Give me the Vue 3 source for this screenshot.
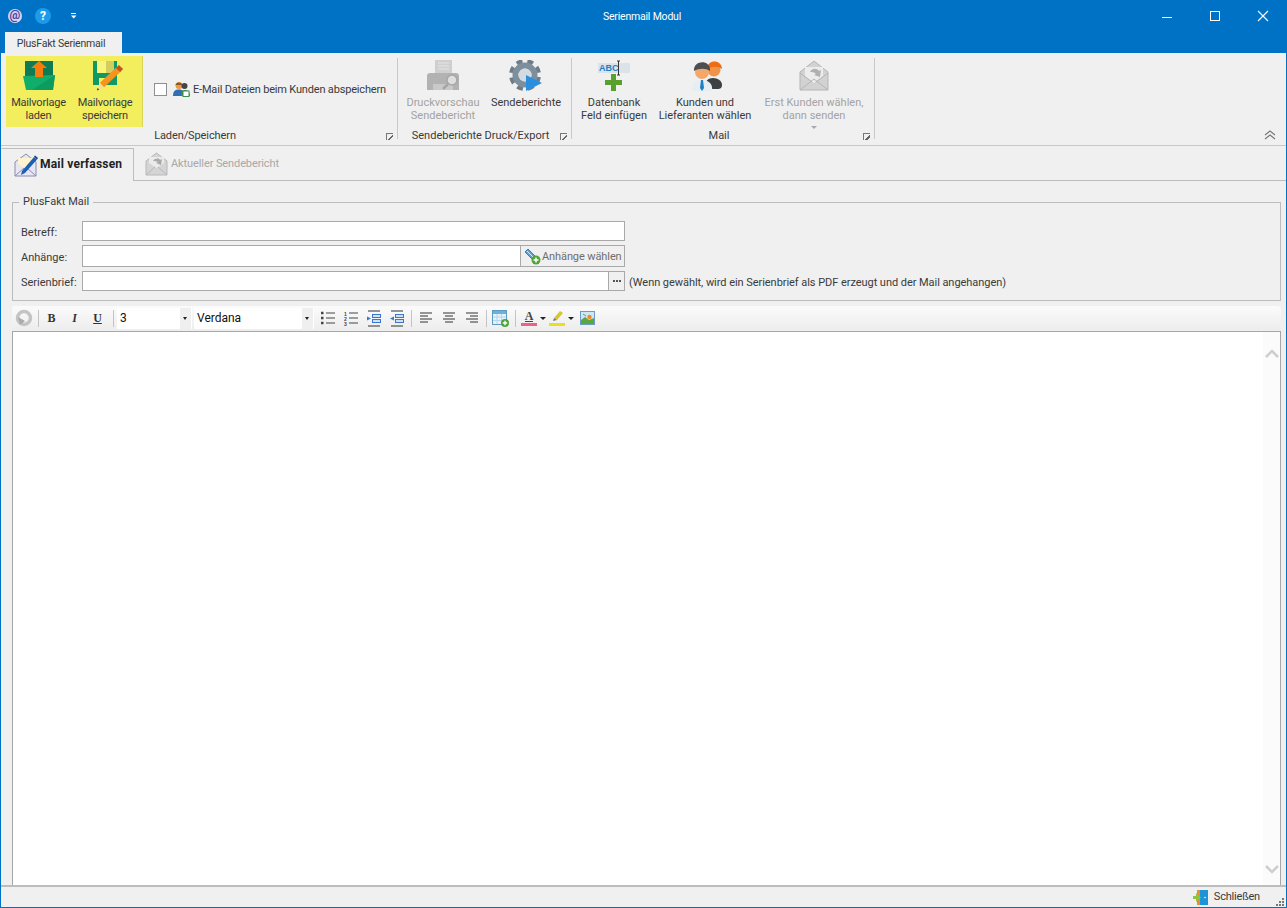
<template>
  <div class="win">

    <!-- title bar -->
    <header class="titlebar">
      <div class="qat">
        <span class="qat-at">@</span>
        <span class="qat-help">?</span>
        <svg class="qat-more" width="8" height="6" viewBox="0 0 8 6"><rect x="1" y="0" width="5" height="1" fill="#fff"/><path d="M1 2.500h5.500L3.700 5.500z" fill="#fff"/></svg>
      </div>
      <div class="title">Serienmail Modul</div>
      <div class="winbtns">
        <svg width="48" height="32" viewBox="0 0 48 32"><rect x="20" y="17" width="10" height="1" fill="#fff"/></svg>
        <svg width="48" height="32" viewBox="0 0 48 32"><rect x="20.500" y="11.500" width="9" height="9" fill="none" stroke="#fff"/></svg>
        <svg width="48" height="32" viewBox="0 0 48 32"><path d="M20 11l10 10M30 11l-10 10" stroke="#fff" stroke-width="1.100"/></svg>
      </div>
    </header>

    <div class="ribbon-tabs">
      <div class="ribbon-tab">PlusFakt Serienmail</div>
    </div>

    <!-- ribbon -->
    <section class="ribbon">
      <div class="rgroup g1">
        <div class="rbody">
          <div class="marked">
            <button class="rbtn w65">
              <svg width="32" height="32" viewBox="0 0 32 32">
                <rect x="2" y="1" width="28" height="19" fill="#0e7b55"/>
                <path d="M0 16L32 15 30 30H3z" fill="#10ad6b"/>
                <path d="M32 15L30 30H9z" fill="#0d9c60"/>
                <path d="M16 1l8 7h-4v9h-8V8H8z" fill="#f57c0c"/>
              </svg>
              <span>Mailvorlage<br>laden</span>
            </button>
            <button class="rbtn w68">
              <svg class="floppy" width="34" height="32" viewBox="0 0 34 32">
                <rect x="2" y="1" width="24" height="24" fill="#0e9a66"/>
                <rect x="6" y="1" width="9" height="12" fill="#f8f57c"/>
                <rect x="15" y="1" width="8" height="12" fill="#d2cd5c"/>
                <rect x="8" y="18" width="7" height="7" fill="#f2ee5e"/>
                <path d="M11 25L28 9" stroke="#f6931f" stroke-width="6"/>
                <path d="M27 10l3-3" stroke="#c8501c" stroke-width="6"/>
                <path d="M8.500 23.500l4.500 4-6 2.500z" fill="#f7d9a0"/>
                <path d="M6.500 28l1.800 1.500-2.300 1z" fill="#333"/>
              </svg>
              <span>Mailvorlage<br>speichern</span>
            </button>
          </div>
          <label class="chk-row">
            <span class="chk"></span>
            <svg width="17" height="16" viewBox="0 0 17 16">
              <circle cx="6" cy="4.500" r="3.500" fill="#ec9a45"/>
              <path d="M2.500 4C3 .5 9 .5 9.500 4z" fill="#8a5a22"/>
              <path d="M0 15c0-5 2-6.500 6-6.500s5 2 5 6.500z" fill="#2e6fb5"/>
              <circle cx="11.500" cy="5" r="3" fill="#444"/>
              <path d="M8 15c0-4 1-6 4-6s5 2 5 6z" fill="#3f8d4c"/>
              <rect x="10" y="10" width="6" height="5.500" fill="#fff" stroke="#3f8d4c"/>
            </svg>
            <span>E-Mail Dateien beim Kunden abspeichern</span>
          </label>
        </div>
        <div class="rlabel tight">Laden/Speichern<i class="launcher"></i></div>
      </div>
      <div class="rsep"></div>

      <div class="rgroup g2">
        <div class="rbody">
          <button class="rbtn w90 off">
            <svg width="32" height="32" viewBox="0 0 32 32">
              <rect x="8" y="0" width="17" height="15" fill="#cfcfcf"/>
              <path d="M11 3h11M11 6h11M11 9h11" stroke="#e6e6e6"/>
              <path d="M0 16q0-3 3-3h26q3 0 3 3v14H0z" fill="#b2b2b2"/>
              <rect x="6" y="24" width="20" height="6" fill="#c9c9c9"/>
              <circle cx="25" cy="20" r="5" fill="#dedede" stroke="#a6a6a6" stroke-width="1.500"/>
              <path d="M21 24l-5 5" stroke="#a6a6a6" stroke-width="2.500"/>
            </svg>
            <span>Druckvorschau<br>Sendebericht</span>
          </button>
          <button class="rbtn w76">
            <svg width="34" height="32" viewBox="0 0 34 32">
              <circle cx="16" cy="15" r="14" fill="none" stroke="#6d7d89" stroke-width="4" stroke-dasharray="6 5" transform="rotate(8 16 15)"/>
              <circle cx="16" cy="15" r="9.500" fill="none" stroke="#7d8f9c" stroke-width="6"/>
              <circle cx="16" cy="15" r="6.500" fill="#d3dbe0"/>
              <path d="M17 15l16 8-16 8z" fill="#2b8fe0"/>
            </svg>
            <span>Sendeberichte</span>
          </button>
        </div>
        <div class="rlabel">Sendeberichte Druck/Export<i class="launcher"></i></div>
      </div>
      <div class="rsep"></div>

      <div class="rgroup">
        <div class="rbody">
          <button class="rbtn w84">
            <svg width="34" height="32" viewBox="0 0 34 32">
              <rect x="1" y="3" width="32" height="10" fill="#dbe2e8"/>
              <text x="2" y="11" class="abc">ABC</text>
              <path d="M20 1h3M20 15h3M21.500 1v14" stroke="#333" fill="none"/>
              <path d="M14 14h5v6h6v5h-6v6h-5v-6H8v-5h6z" fill="#5aa02c"/>
            </svg>
            <span>Datenbank<br>Feld einfügen</span>
          </button>
          <button class="rbtn w98">
            <svg class="people" width="32" height="32" viewBox="0 0 32 32">
              <path d="M14 27c0-6 3-9 8-9s9 3 9 7-3 4-5 4H15z" fill="#3c4043"/>
              <circle cx="23" cy="10" r="6.500" fill="#f2934a"/>
              <path d="M16 9c0-10 15-10 15 0-4-3-10-3-15 0z" fill="#ee6c12"/>
              <path d="M1 31c-1-7 3-11 10-11s11 4 10 11z" fill="#e6edf3"/>
              <path d="M10 20h2l1 8-2 3-2-3z" fill="#1f7fc4"/>
              <circle cx="11" cy="12" r="7" fill="#f3a869"/>
              <path d="M3 11c-1-11 17-12 16 0-4-3-11-3-16 0z" fill="#4b4f52"/>
            </svg>
            <span>Kunden und<br>Lieferanten wählen</span>
          </button>
          <button class="rbtn w120 off">
            <svg width="32" height="32" viewBox="0 0 32 32">
              <path d="M2 12L16 1l14 11v18H2z" fill="#d2d2d2" stroke="#b5b5b5"/>
              <path d="M7 16V7h18v9l-9 7z" fill="#ececec"/>
              <path d="M2 13l12 9M30 13l-12 9M2 30l14-11 14 11" fill="none" stroke="#b5b5b5"/>
              <path d="M12 12c2-4 7-4 9-1l2-1-1 7-6-2 2-1c-2-2-4-2-6-2z" fill="#b0b0b0"/>
            </svg>
            <span>Erst Kunden wählen,<br>dann senden</span>
            <i class="mini-caret"></i>
          </button>
        </div>
        <div class="rlabel">Mail<i class="launcher"></i></div>
      </div>
      <div class="rsep"></div>

      <svg class="collapse" width="12" height="10" viewBox="0 0 12 10">
        <path d="M1 5l5-4 5 4M1 9l5-4 5 4" fill="none" stroke="#777" stroke-width="1.100"/>
      </svg>
    </section>

    <!-- document tabs -->
    <nav class="doc-tabs">
      <div class="doc-tab active">
        <svg width="24" height="24" viewBox="0 0 24 24">
          <path d="M1 9L12 1l10 8v14H1z" fill="#e6e6f4" stroke="#8c8cae"/>
          <path d="M4 11V5h15v6l-7 5z" fill="#fdf3d0"/>
          <path d="M1 23l9-8M22 23l-9-8" stroke="#8c8cae" fill="none"/>
          <path d="M8 18L20 4l3 2.500L11 20l-4 2z" fill="#1e5fb5"/>
          <path d="M20 3.500l1-1 3 2.500-1 1.500z" fill="#123c7a"/>
        </svg>
        <span>Mail verfassen</span>
      </div>
      <div class="doc-tab">
        <svg width="23" height="24" viewBox="0 0 23 24">
          <path d="M1 9L11.500 1 22 9v14H1z" fill="#d4d4d4" stroke="#b8b8b8"/>
          <path d="M4 11V5h15v6l-7.500 5z" fill="#ebebeb"/>
          <path d="M1 23l9-8M22 23l-9-8" stroke="#b8b8b8" fill="none"/>
          <path d="M8 9c2-3 6-3 7-1l2-1-1 6-5-2 2-1c-2-1-3-1-5-1z" fill="#a9a9a9"/>
        </svg>
        <span>Aktueller Sendebericht</span>
      </div>
    </nav>

    <main class="content">
      <fieldset class="mailbox">
        <legend>PlusFakt Mail</legend>
        <div class="frow">
          <label>Betreff:</label>
          <div class="inp w543"></div>
        </div>
        <div class="frow tall">
          <label>Anhänge:</label>
          <div class="inp w438"></div>
          <div class="attach-btn">
            <svg width="18" height="18" viewBox="0 0 18 18">
              <path d="M2 5l3-3 9 9-3 3z" fill="#5ea1d6" stroke="#3a7fb8"/>
              <path d="M4 4l8 8" stroke="#d5e8f6"/>
              <circle cx="13" cy="13" r="4.500" fill="#4ea33b"/>
              <path d="M13 10.500v5M10.500 13h5" stroke="#fff" stroke-width="1.500"/>
            </svg>
            <span>Anhänge wählen</span>
          </div>
        </div>
        <div class="frow">
          <label>Serienbrief:</label>
          <div class="inp w527"></div>
          <div class="dots-btn"><i></i><i></i><i></i></div>
          <span class="hint">(Wenn gewählt, wird ein Serienbrief als PDF erzeugt und der Mail angehangen)</span>
        </div>
      </fieldset>

      <!-- editor toolbar -->
      <div class="tbar">
        <button class="tb">
          <svg width="18" height="18" viewBox="0 0 18 18">
            <circle cx="9" cy="9" r="6.500" fill="none" stroke="#c4c4c4" stroke-width="3.500"/>
            <path d="M3 8l2 8 5-4z" fill="#ababab"/>
          </svg>
        </button>
        <i class="sep first"></i>
        <button class="tb fmt bold">B</button>
        <button class="tb fmt ital">I</button>
        <button class="tb fmt under">U</button>
        <i class="sep wide"></i>
        <div class="sel w75"><span>3</span><b class="sel-arrow"></b></div>
        <div class="sel w120"><span>Verdana</span><b class="sel-arrow"></b></div>

        <button class="tb">
          <svg width="16" height="16" viewBox="0 0 16 16"><path d="M6 3h9M6 8h9M6 13h9" stroke="#444"/><path d="M1 3h3M1 8h3M1 13h3" stroke="#444" stroke-width="2.500" stroke-dasharray="2.500 .5"/></svg>
        </button>
        <button class="tb">
          <svg width="16" height="16" viewBox="0 0 16 16"><path d="M6 3h9M6 8h9M6 13h9" stroke="#444"/><text x="1" y="5.500" class="num">1</text><text x="1" y="10.500" class="num">2</text><text x="1" y="15.500" class="num">3</text></svg>
        </button>
        <button class="tb">
          <svg width="16" height="17" viewBox="0 0 16 17"><path d="M2 1h12M2 16h12" stroke="#333"/><rect x="6.500" y="4.500" width="8" height="3" fill="#cfe0f7" stroke="#3a78d0"/><rect x="6.500" y="9.500" width="8" height="3" fill="#cfe0f7" stroke="#3a78d0"/><path d="M1 6.500l4 2-4 2z" fill="#3a78d0"/></svg>
        </button>
        <button class="tb">
          <svg width="16" height="17" viewBox="0 0 16 17"><path d="M2 1h12M2 16h12" stroke="#333"/><rect x="6.500" y="4.500" width="8" height="3" fill="#cfe0f7" stroke="#3a78d0"/><rect x="6.500" y="9.500" width="8" height="3" fill="#cfe0f7" stroke="#3a78d0"/><path d="M5 6.500v4l-4-2z" fill="#3a78d0"/></svg>
        </button>
        <i class="sep"></i>
        <button class="tb">
          <svg width="14" height="14" viewBox="0 0 14 14"><path d="M1 2h12M1 5h8M1 8h12M1 11h8" stroke="#333"/></svg>
        </button>
        <button class="tb">
          <svg width="14" height="14" viewBox="0 0 14 14"><path d="M1 2h12M3 5h8M1 8h12M3 11h8" stroke="#333"/></svg>
        </button>
        <button class="tb">
          <svg width="14" height="14" viewBox="0 0 14 14"><path d="M1 2h12M5 5h8M1 8h12M5 11h8" stroke="#333"/></svg>
        </button>
        <i class="sep"></i>
        <button class="tb">
          <svg width="17" height="17" viewBox="0 0 17 17">
            <rect x=".5" y=".5" width="14" height="14" fill="#e6f2fa" stroke="#5b9bc4"/>
            <rect x="1" y="1" width="13" height="3" fill="#6fb0d8"/>
            <path d="M1 7h13M1 10.500h13M5 4v10M9.500 4v10" stroke="#b6d5e8"/>
            <circle cx="13" cy="13" r="4" fill="#4ea33b"/>
            <path d="M13 10.800v4.400M10.800 13h4.400" stroke="#fff" stroke-width="1.300"/>
          </svg>
        </button>
        <i class="sep"></i>
        <button class="tb w28">
          <span class="tcolor">
            <em>A</em><u class="pink"></u>
          </span>
          <b class="caret"></b>
        </button>
        <button class="tb w30">
          <span class="tcolor">
            <svg width="14" height="12" viewBox="0 0 14 12"><path d="M4 8l6-7 3 2-6 7z" fill="#d8c62a"/><path d="M4 8l3 2-4 1z" fill="#777"/></svg>
            <u class="yel"></u>
          </span>
          <b class="caret"></b>
        </button>
        <button class="tb">
          <svg width="15" height="14" viewBox="0 0 15 14">
            <rect x=".5" y=".5" width="14" height="13" fill="#cfe6f7" stroke="#6a9cc4"/>
            <path d="M1 13V9l4-3 4 3 5-2v6z" fill="#5da83e"/>
            <circle cx="9.500" cy="6" r="2.200" fill="#ee8a2c"/>
            <path d="M3 3l3 2" stroke="#888"/>
          </svg>
        </button>
      </div>

      <div class="editor">
        <div class="edit-body"></div>
        <div class="scroll">
          <svg width="16" height="10" viewBox="0 0 16 10"><path d="M2 9l6-6 6 6" fill="none" stroke="#cfcfcf" stroke-width="2.600"/></svg>
          <svg width="16" height="10" viewBox="0 0 16 10"><path d="M2 1l6 6 6-6" fill="none" stroke="#cfcfcf" stroke-width="2.600"/></svg>
        </div>
      </div>
    </main>

    <footer class="status">
      <div class="close-item">
        <svg width="16" height="16" viewBox="0 0 16 16">
          <rect x="4" y="1" width="11" height="15" fill="#ef8b2c"/>
          <path d="M7 1h8v15H7z" fill="#1b95d8"/>
          <circle cx="12" cy="8.500" r=".8" fill="#fff"/>
          <path d="M0 7h3V4l5 4.500L3 13v-3H0z" fill="#8cc63f"/>
        </svg>
        <span>Schließen</span>
      </div>
      <svg class="grip" width="9" height="9" viewBox="0 0 9 9">
        <path d="M6 0h2v2H6zM3 3h2v2H3zM6 3h2v2H6zM0 6h2v2H0zM3 6h2v2H3zM6 6h2v2H6z" fill="#777"/>
      </svg>
    </footer>
  </div>
</template>

<script setup>
</script>

<style>
html, body { margin: 0; overflow: hidden; }
</style>

<style scoped>
* { box-sizing: border-box; }

.win {
  width: 1287px;
  height: 908px;
  display: flex;
  flex-direction: column;
  background: #f0f0f0;
  border: 1px solid #0072c6;
  border-top: 0;
  font-family: Roboto, "Open Sans", Arial, sans-serif;
  font-size: 11px;
  line-height: 13px;
  color: #3a3a3a;
}

button {
  background: none;
  border: 0;
  padding: 0;
  margin: 0;
  font: inherit;
  letter-spacing: inherit;
  color: inherit;
}

/* ─── Title bar ─────────────────────────── */
.titlebar {
  height: 32px;
  display: grid;
  grid-template-columns: 1fr 1fr 1fr;
  align-items: center;
  background: #0072c6;
  color: #fff;
}

.qat { display: flex; align-items: center; padding-left: 7px; }

.qat-at {
  width: 14px;
  height: 14px;
  border-radius: 50%;
  background: #d9d5f2;
  color: #4a3f9a;
  font-size: 12px;
  font-weight: 700;
  line-height: 13px;
  text-align: center;
}

.qat-help {
  width: 16px;
  height: 16px;
  margin-left: 13px;
  border-radius: 50%;
  background: #1d9bea;
  color: #fff;
  font-size: 12px;
  font-weight: 700;
  line-height: 16px;
  text-align: center;
}

.qat-more { margin-left: 19px; }

.title {
  text-align: center;
  margin-left: -3px;
  font-size: 10.500px;
  letter-spacing: -0.2px;
}

.winbtns { display: flex; justify-content: flex-end; }

.ribbon-tabs { height: 21px; background: #0072c6; padding-left: 4px; }

.ribbon-tab {
  width: 117px;
  height: 21px;
  padding-right: 5px;
  background: #f0f0f0;
  text-align: center;
  font-size: 10.500px;
  letter-spacing: -0.2px;
  line-height: 23px;
}

/* ─── Ribbon ────────────────────────────── */
.ribbon {
  height: 93px;
  display: flex;
  border-bottom: 1px solid #c8c8c8;
}

.rgroup { display: flex; flex-direction: column; }
.g1 { width: 396px; }
.g2 { width: 173px; }

.rbody { height: 71px; display: flex; margin-top: 3px; }

.marked {
  display: flex;
  width: 137px;
  height: 71px;
  margin-left: 5px;
  background: #f2ee5e;
  border-right: 1px solid #d8d45a;
  letter-spacing: -0.2px;
}

.rbtn {
  height: 71px;
  display: flex;
  flex-direction: column;
  align-items: center;
  padding-top: 4px;
  position: relative;
}

.rbtn svg { height: 32px; margin-bottom: 4px; }
.rbtn .people { margin-left: 4px; }
.rbtn .floppy { margin-left: 5px; }
.off { color: #a3a3a3; }

.w65 { width: 65px; }
.w68 { width: 68px; }
.w76 { width: 76px; }
.w84 { width: 84px; }
.w90 { width: 90px; }
.w98 { width: 98px; }
.w120 { width: 120px; }

.abc { font: 700 9px "Liberation Sans", Arial, sans-serif; fill: #1f7fc4; }

.mini-caret {
  position: absolute;
  left: 57px;
  bottom: -2px;
  border: 3px solid transparent;
  border-top-color: #a8a8a8;
  border-bottom: 0;
}

.chk-row {
  display: flex;
  align-items: center;
  height: 16px;
  margin: 25px 0 0 11px;
}

.chk {
  width: 13px;
  height: 13px;
  background: #fff;
  border: 1px solid #8f8f8f;
  margin-right: 6px;
}

.chk-row span:last-child {
  margin-left: 3px;
  white-space: nowrap;
  letter-spacing: -0.18px;
}

.rlabel {
  position: relative;
  height: 15px;
  margin-top: 1px;
  padding-right: 8px;
  text-align: center;
  line-height: 15px;
  white-space: nowrap;
}

.rlabel.tight { letter-spacing: -0.1px; }

.launcher {
  position: absolute;
  right: 4px;
  top: 5px;
  width: 7px;
  height: 7px;
  border-top: 1px solid #777;
  border-left: 1px solid #777;
  background: linear-gradient(135deg, transparent 55%, #666 55%, #666 75%, transparent 75%);
}

.rsep { width: 1px; margin: 5px 0 6px; background: #c9c9c9; }

.collapse { margin: auto 10px 5px auto; }

/* ─── Document tabs ─────────────────────── */
.doc-tabs {
  height: 35px;
  display: flex;
  align-items: flex-end;
  border-bottom: 1px solid #bdbdbd;
}

.doc-tab {
  height: 32px;
  display: flex;
  align-items: center;
  color: #a8a8a8;
  font-size: 11px;
  letter-spacing: -0.1px;
  padding-left: 11px;
  padding-bottom: 1px;
}

.doc-tab span { margin-left: 3px; }

.doc-tab.active {
  width: 133px;
  height: 33px;
  margin-bottom: -1px;
  padding-left: 12px;
  background: #f0f0f0;
  border: 1px solid #bdbdbd;
  border-bottom: 0;
  border-left-color: transparent;
  color: #222;
  font-size: 12px;
  font-weight: 700;
  letter-spacing: 0.2px;
}

.doc-tab.active span { margin-left: 2px; }

/* ─── Form ──────────────────────────────── */
.content {
  flex: 1;
  min-height: 0;
  display: flex;
  flex-direction: column;
  padding: 0 5px 0 11px;
}

.mailbox {
  margin: 14px 0 0;
  padding: 11px 8px 9px;
  border: 1px solid #bcbcbc;
  min-width: 0;
}

.mailbox legend {
  margin-left: -2px;
  padding: 0 4px 2px;
  line-height: 13px;
}

.frow { display: flex; align-items: center; height: 20px; }
.frow + .frow { margin-top: 4px; }
.frow.tall { height: 22px; }
.frow label { width: 61px; padding-top: 2px; white-space: nowrap; }

.inp { height: 100%; background: #fff; border: 1px solid #a9a9a9; }
.w543 { width: 543px; }
.w438 { width: 439px; }
.w527 { width: 527px; }

.attach-btn {
  width: 104px;
  height: 100%;
  display: flex;
  align-items: center;
  padding-left: 2px;
  border: 1px solid #a9a9a9;
  border-left: 0;
  color: #6e6e6e;
  white-space: nowrap;
  letter-spacing: -0.1px;
}

.attach-btn span { margin-left: 1px; }

.dots-btn {
  width: 16px;
  height: 100%;
  display: flex;
  align-items: center;
  justify-content: center;
  gap: 1px;
  border: 1px solid #a9a9a9;
  border-left: 0;
}

.dots-btn i { width: 2px; height: 2px; background: #555; }

.hint { margin-left: 4px; padding-top: 2px; white-space: nowrap; letter-spacing: -0.05px; }

/* ─── Editor toolbar ────────────────────── */
.tbar {
  height: 24px;
  margin-top: 5px;
  display: flex;
  align-items: center;
  border-radius: 2px 4px 0 0;
  background: linear-gradient(#fbfbfb, #ededed);
}

.tb {
  width: 23px;
  height: 24px;
  flex-shrink: 0;
  display: flex;
  align-items: center;
  justify-content: center;
}

.w28 { width: 28px; justify-content: flex-start; padding-left: 3px; }
.w30 { width: 30px; justify-content: flex-start; padding-left: 3px; }

.fmt { font: 700 12px "Liberation Serif", "Times New Roman", serif; color: #333; }
.ital { font-style: italic; }
.under { text-decoration: underline; }

.sep {
  width: 1px;
  height: 17px;
  flex-shrink: 0;
  margin: 0 2px 0 3px;
  background: #c4c4c4;
}

.sep.first { margin-right: 1px; }
.sep.wide { margin-left: 4px; margin-right: 3px; }

.sel {
  height: 21px;
  margin-right: 2px;
  flex-shrink: 0;
  display: flex;
  align-items: center;
  justify-content: space-between;
  padding-left: 3px;
  padding-right: 1px;
  background: #fff;
  color: #111;
  font-size: 12px;
}

.sel.w75 { width: 75px; }
.sel.w120 { width: 120px; }

.sel-arrow {
  width: 11px;
  height: 21px;
  background: #efefef;
  position: relative;
}

.sel-arrow::after {
  content: '';
  position: absolute;
  left: 3px;
  top: 9px;
  border: 2.500px solid transparent;
  border-top: 3px solid #222;
  border-bottom: 0;
}

.num { font: 700 5px "Liberation Sans", Arial, sans-serif; fill: #444; }

.tcolor {
  width: 16px;
  display: flex;
  flex-direction: column;
  align-items: center;
}

.tcolor em {
  font: 700 12px/13px "Liberation Serif", serif;
  color: #444;
  border-bottom: 1px solid #444;
  height: 12px;
}

.tcolor svg { display: block; }
.tcolor u { display: block; width: 16px; height: 3px; margin-top: 1px; }
.pink { background: #ef5f88; }
.yel { background: #e6e021; }

.caret {
  margin-left: 3px;
  border: 3px solid transparent;
  border-top: 3px solid #222;
  border-bottom: 0;
}

/* ─── Editor ────────────────────────────── */
.editor {
  flex: 1;
  min-height: 0;
  margin-top: 1px;
  display: flex;
  background: #fff;
  border: 1px solid #a6a6a6;
  border-bottom: 0;
}

.edit-body { flex: 1; }

.scroll {
  width: 17px;
  display: flex;
  flex-direction: column;
  justify-content: space-between;
  align-items: center;
  padding: 16px 0 10px;
  background: #fbfbfb;
}

/* ─── Status bar ────────────────────────── */
.status {
  height: 22px;
  display: flex;
  align-items: center;
  justify-content: flex-end;
  position: relative;
  border-top: 2px solid #bdbdbd;
  padding: 0 26px 1px 0;
}

.close-item { display: flex; align-items: center; letter-spacing: -0.2px; }
.close-item span { margin-left: 5px; }

.grip { position: absolute; right: 1px; bottom: 0; }
</style>
